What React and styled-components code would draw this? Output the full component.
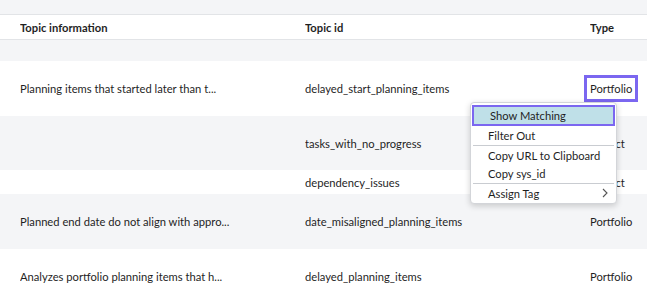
import React from 'react';
import styled, { createGlobalStyle } from 'styled-components';

const GlobalStyle = createGlobalStyle`
  html, body { margin: 0; padding: 0; background: #fff; }
  body { font-family: Lato, "Liberation Sans", sans-serif; color: #1f1f1f; }
`;

const Page = styled.div`
  position: relative;
  width: 647px;
  height: 303px;
  overflow: hidden;
  background: #fff;
`;

const TopBand = styled.div`
  height: 14px;
  background: #f4f5f7;
  border-bottom: 1px solid #e2e4e7;
`;

const Row = styled.div`
  display: grid;
  grid-template-columns: 285px 285px 1fr;
  align-items: center;
  padding-left: 20px;
  height: ${p => p.h}px;
  background: ${p => (p.gray ? '#f4f5f7' : '#fff')};
  font-size: 11.2px;
`;

const HeaderRow = styled(Row)`
  font-weight: 700;
  border-bottom: 1px solid #e2e4e7;
`;

const Cell = styled.div`
  white-space: nowrap;
  overflow: ${p => (p.visible ? 'visible' : 'hidden')};
`;

const Focused = styled.span`
  padding: 1px 0;
  outline: 3px solid #7b67f0;
  outline-offset: 3px;
`;

const Menu = styled.div`
  position: absolute;
  left: 470px;
  top: 102px;
  width: 145px;
  padding: 2px 0 1px;
  background: #fff;
  border: 1px solid #d3d5d9;
  border-radius: 4px;
  box-shadow: 0 2px 6px rgba(0, 0, 0, 0.18);
  font-size: 11.2px;
  color: #1f1f1f;
  white-space: nowrap;
`;

const Item = styled.div`
  display: flex;
  align-items: center;
  justify-content: space-between;
  height: ${p => (p.active ? 21 : 18)}px;
  box-sizing: border-box;
  margin: 0 ${p => (p.active ? 1 : 0)}px;
  padding: 0 8px 0 ${p => (p.active ? 16 : 17)}px;
  background: ${p => (p.active ? '#bfe0e8' : 'transparent')};
  border: ${p => (p.active ? '2px solid #7b67f0' : 'none')};
`;

const Separator = styled.div`
  height: 1px;
  margin: 1px 2px 0;
  background: #c9ccd1;
`;

const Chevron = () => (
  <svg width="6" height="10" viewBox="0 0 6 10">
    <path d="M1 1l4 4-4 4" fill="none" stroke="#555" strokeWidth="1.1" />
  </svg>
);

const rows = [
  { h: 55, info: 'Planning items that started later than t...', id: 'delayed_start_planning_items', type: 'Portfolio', focus: true },
  { h: 54, gray: true, info: '', id: 'tasks_with_no_progress', type: 'Project' },
  { h: 24, info: '', id: 'dependency_issues', type: 'Project' },
  { h: 55, gray: true, info: 'Planned end date do not align with appro...', id: 'date_misaligned_planning_items', type: 'Portfolio' },
  { h: 55, info: 'Analyzes portfolio planning items that h...', id: 'delayed_planning_items', type: 'Portfolio' },
];

export default function App() {
  return (
    <Page>
      <GlobalStyle />
      <TopBand />
      <HeaderRow h={24}>
        <Cell>Topic information</Cell>
        <Cell>Topic id</Cell>
        <Cell>Type</Cell>
      </HeaderRow>
      <Row h={21} gray />
      {rows.map((r, i) => (
        <Row key={i} h={r.h} gray={r.gray}>
          <Cell>{r.info}</Cell>
          <Cell>{r.id}</Cell>
          <Cell visible>
            {r.focus ? <Focused>{r.type}</Focused> : r.type}
          </Cell>
        </Row>
      ))}
      <Menu>
        <Item active>Show Matching</Item>
        <Item>Filter Out</Item>
        <Separator />
        <Item>Copy URL to Clipboard</Item>
        <Item>Copy sys_id</Item>
        <Separator />
        <Item>
          Assign Tag
          <Chevron />
        </Item>
      </Menu>
    </Page>
  );
}
